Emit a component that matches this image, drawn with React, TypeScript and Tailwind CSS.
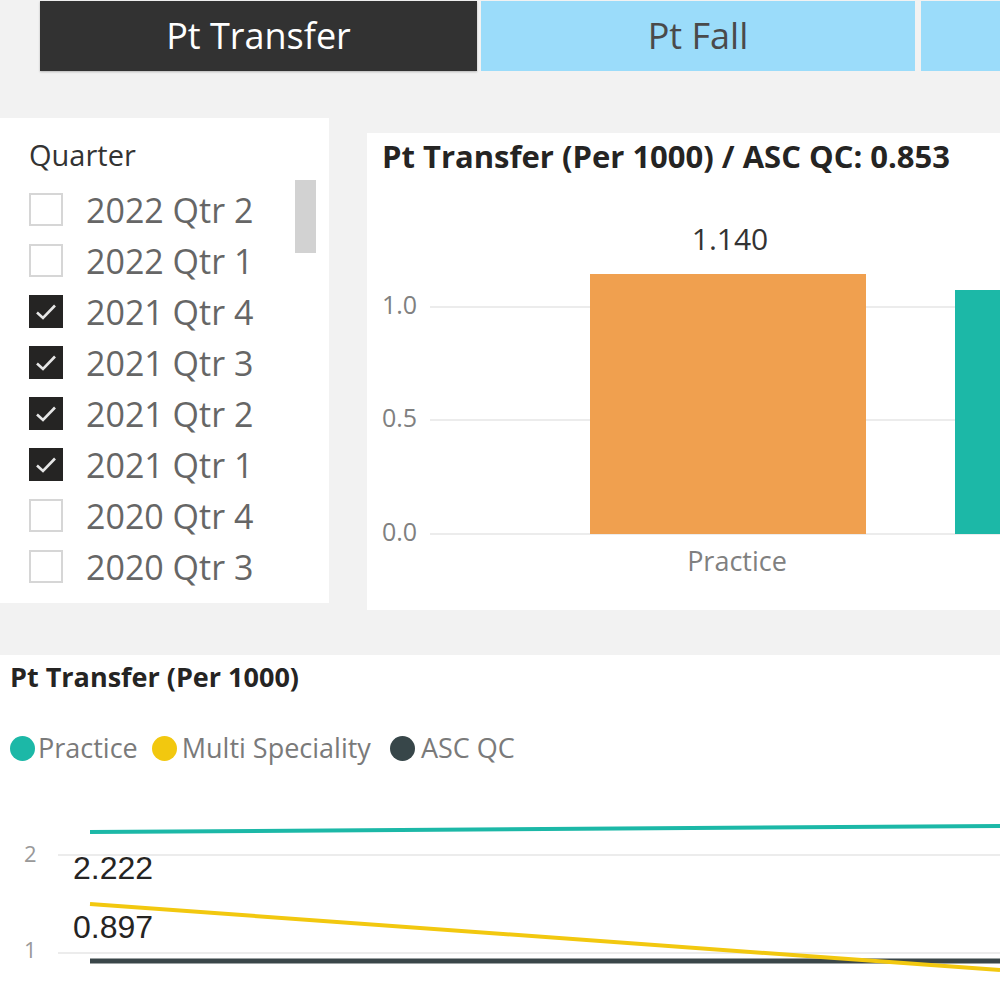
import React from 'react';

const quarters = [
  { label: '2022 Qtr 2', checked: false },
  { label: '2022 Qtr 1', checked: false },
  { label: '2021 Qtr 4', checked: true },
  { label: '2021 Qtr 3', checked: true },
  { label: '2021 Qtr 2', checked: true },
  { label: '2021 Qtr 1', checked: true },
  { label: '2020 Qtr 4', checked: false },
  { label: '2020 Qtr 3', checked: false },
];

const font = { fontFamily: '"Open Sans", "Noto Sans", sans-serif' };

const CheckBox: React.FC<{ checked: boolean }> = ({ checked }) =>
  checked ? (
    <div className="w-[34px] h-[33px] bg-[#252423] flex items-center justify-center">
      <svg width="24" height="20" viewBox="0 0 24 20">
        <path d="M3 10.5 L9 16 L21 3.5" fill="none" stroke="#e6e6e6" strokeWidth="2.6" />
      </svg>
    </div>
  ) : (
    <div className="w-[34px] h-[33px] bg-white border-2 border-[#d6d6d6]" />
  );

const App: React.FC = () => {
  return (
    <div
      className="w-[1000px] h-[1000px] bg-[#f2f2f2] overflow-hidden flex flex-col"
      style={font}
    >
      {/* Tabs */}
      <div className="h-[70px] mt-[1px] flex pl-[40px]">
        <div className="w-[437px] bg-[#323232] flex items-center justify-center text-white text-[36px] shadow-[0_1px_2px_rgba(0,0,0,0.25)]">
          Pt Transfer
        </div>
        <div className="w-[434px] ml-[4px] bg-[#9bdcfa] flex items-center justify-center text-[#4a4a4a] text-[36px]">
          Pt Fall
        </div>
        <div className="flex-1 ml-[6px] bg-[#9bdcfa]" />
      </div>

      {/* Middle row */}
      <div className="mt-[47px] flex items-start">
        {/* Slicer */}
        <div className="w-[329px] h-[485px] bg-white pl-[29px] pt-[18px]">
          <div className="text-[29px] text-[#333] leading-[38px]">Quarter</div>
          <div className="flex">
            <div className="flex flex-col pt-[10px]">
              {quarters.map((q) => (
                <div key={q.label} className="h-[51px] flex items-center gap-[23px]">
                  <CheckBox checked={q.checked} />
                  <span className="text-[34px] text-[#666] leading-none">{q.label}</span>
                </div>
              ))}
            </div>
            <div className="ml-auto mr-[13px] mt-[6px] w-[21px] h-[73px] bg-[#d2d2d2]" />
          </div>
        </div>

        {/* Bar chart */}
        <div className="ml-[38px] mt-[15px] flex-1 h-[477px] bg-white flex flex-col">
          <div className="h-[45px] pl-[15px] pt-[4px] text-[31px] font-bold text-[#252423] leading-[38px] whitespace-nowrap">
            Pt Transfer (Per 1000) / ASC QC: 0.853
          </div>
          <svg width="633" height="432" className="block">
            <g stroke="#ececec" strokeWidth="2">
              <line x1="63" y1="129" x2="633" y2="129" />
              <line x1="63" y1="242" x2="633" y2="242" />
              <line x1="63" y1="356" x2="633" y2="356" />
            </g>
            <g fill="#808080" fontSize="25" dominantBaseline="middle">
              <text x="15" y="129">1.0</text>
              <text x="15" y="242">0.5</text>
              <text x="15" y="356">0.0</text>
            </g>
            <rect x="223" y="96" width="276" height="260" fill="#f0a04f" />
            <rect x="588" y="112" width="60" height="244" fill="#1cb8a7" />
            <text x="363" y="64" fontSize="30" fill="#333" textAnchor="middle" dominantBaseline="middle">
              1.140
            </text>
            <text x="370" y="386" fontSize="27" fill="#808080" textAnchor="middle" dominantBaseline="middle">
              Practice
            </text>
          </svg>
        </div>
      </div>

      {/* Line chart */}
      <div className="mt-[45px] flex-1 bg-white flex flex-col">
        <div className="pl-[10px] pt-[5px] h-[46px] text-[27px] font-bold text-[#252423] leading-[34px] whitespace-nowrap">
          Pt Transfer (Per 1000)
        </div>
        <div className="h-[49px] pl-[10px] mt-[23px] flex items-center text-[27px] text-[#7a7a7a]">
          <span className="w-[25px] h-[25px] rounded-full bg-[#1cb8a7]" />
          <span className="ml-[3px]">Practice</span>
          <span className="ml-[14px] w-[25px] h-[25px] rounded-full bg-[#f2c80f]" />
          <span className="ml-[5px]">Multi Speciality</span>
          <span className="ml-[19px] w-[25px] h-[25px] rounded-full bg-[#374649]" />
          <span className="ml-[6px]">ASC QC</span>
        </div>
        <svg width="1000" height="227" className="block">
          {/* page y = svg y + 773 */}
          <g stroke="#ececec" strokeWidth="2">
            <line x1="58" y1="82" x2="1000" y2="82" />
            <line x1="58" y1="180" x2="1000" y2="180" />
          </g>
          <g fill="#999" fontSize="22" dominantBaseline="middle">
            <text x="24" y="83">2</text>
            <text x="24" y="179">1</text>
          </g>
          <line x1="90" y1="59" x2="1000" y2="53" stroke="#1cb8a7" strokeWidth="4" />
          <line x1="90" y1="188" x2="1000" y2="188" stroke="#3a4649" strokeWidth="5" />
          <line x1="90" y1="131" x2="1000" y2="197" stroke="#f2c80f" strokeWidth="4" />
          <g fill="#252423" fontSize="32" dominantBaseline="middle" fontFamily='"Liberation Sans", Arial, sans-serif'>
            <text x="73" y="98">2.222</text>
            <text x="73" y="157">0.897</text>
          </g>
        </svg>
      </div>
    </div>
  );
};

export default App;
